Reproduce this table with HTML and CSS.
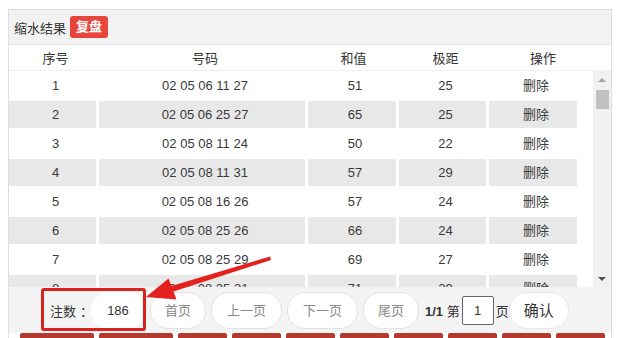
FILE: index.html
```html
<!DOCTYPE html>
<html lang="zh-CN">
<head>
<meta charset="utf-8">
<title>缩水结果</title>
<link rel="stylesheet" href="styles.css">
</head>
<body>
<div class="panel">
  <div class="panel-head"><span class="title">缩水结果</span><span class="badge">复盘</span></div>
  <div class="thead">
    <div class="th">序号</div><div class="th">号码</div><div class="th">和值</div><div class="th">极距</div><div class="th">操作</div>
  </div>
  <div class="tbody-wrap">
    <div class="tbody">
      <div class="row"><div class="td">1</div><div class="td">02 05 06 11 27</div><div class="td">51</div><div class="td">25</div><div class="td">删除</div></div>
      <div class="row alt"><div class="td">2</div><div class="td">02 05 06 25 27</div><div class="td">65</div><div class="td">25</div><div class="td">删除</div></div>
      <div class="row"><div class="td">3</div><div class="td">02 05 08 11 24</div><div class="td">50</div><div class="td">22</div><div class="td">删除</div></div>
      <div class="row alt"><div class="td">4</div><div class="td">02 05 08 11 31</div><div class="td">57</div><div class="td">29</div><div class="td">删除</div></div>
      <div class="row"><div class="td">5</div><div class="td">02 05 08 16 26</div><div class="td">57</div><div class="td">24</div><div class="td">删除</div></div>
      <div class="row alt"><div class="td">6</div><div class="td">02 05 08 25 26</div><div class="td">66</div><div class="td">24</div><div class="td">删除</div></div>
      <div class="row"><div class="td">7</div><div class="td">02 05 08 25 29</div><div class="td">69</div><div class="td">27</div><div class="td">删除</div></div>
      <div class="row alt"><div class="td">8</div><div class="td">02 05 08 25 31</div><div class="td">71</div><div class="td">29</div><div class="td">删除</div></div>
    </div>
    <div class="scrollbar">
      <div class="sb-btn"><span class="tri-up"></span></div>
      <div class="sb-thumb"></div>
      <div class="sb-fill"></div>
      <div class="sb-btn"><span class="tri-down"></span></div>
    </div>
  </div>
  <div class="footer">
    <span class="count-label">注数<span class="colon">：</span></span>
    <span class="count-val">186</span>
    <span class="pbtn w56">首页</span>
    <span class="pbtn w71">上一页</span>
    <span class="pbtn w71">下一页</span>
    <span class="pbtn w56">尾页</span>
    <span class="pages"><b>1/1</b> 第</span>
    <span class="page-input">1</span>
    <span class="page-unit">页</span>
    <span class="pbtn confirm">确认</span>
  </div>
  <div class="redrow">
    <span class="rb wide"></span><span class="rb wide"></span><span class="rb"></span><span class="rb"></span><span class="rb"></span><span class="rb"></span><span class="rb"></span><span class="rb"></span><span class="rb"></span><span class="rb"></span>
  </div>
</div>
<div class="callout-box"></div>
<svg class="arrow" width="640" height="338" viewBox="0 0 640 338">
  <polygon points="146,297 168.5,278.5 171.5,286 270,256.5 271,260 173.5,291.5 176.5,299.5" fill="#e3211d"/>
</svg>
</body>
</html>
```

FILE: styles.css
```css
html, body {
  margin: 0;
  padding: 0;
  background: #fff;
  height: 338px;
  overflow: hidden;
}
body {
  font-family: "Liberation Sans", "Noto Sans CJK SC", sans-serif;
  font-size: 13px;
  color: #333;
  position: relative;
}
.panel {
  margin: 9px 0 0 8px;
  width: 604px;
  box-sizing: border-box;
  border: 1px solid #dedede;
  border-bottom: none;
  background: #fff;
}
.panel-head {
  height: 34px;
  border-bottom: 1px solid #e6e6e6;
  background: #f2f2f2;
  display: flex;
  align-items: center;
  padding-left: 5px;
}
.title {
  color: #333;
}
.badge {
  margin-left: 4px;
  height: 22px;
  line-height: 22px;
  padding: 0 6px;
  background: #e8463d;
  color: #fff;
  font-weight: bold;
  border-radius: 3px;
}
.thead {
  height: 26px;
  display: grid;
  grid-template-columns: 87px 206px 85px 93px 96px;
  column-gap: 3px;
  align-items: center;
  border-bottom: 1px solid #f0f0f0;
  box-sizing: border-box;
}
.th {
  text-align: center;
  padding-left: 6px;
  color: #333;
}
.tbody-wrap {
  display: flex;
  height: 216px;
  overflow: hidden;
}
.tbody {
  width: 584px;
  background: #fff;
}
.row {
  height: 29px;
  box-sizing: border-box;
  padding: 1px 0;
  display: grid;
  grid-template-columns: 87px 206px 88px 87px 88px;
  column-gap: 3px;
}
.td {
  text-align: center;
  padding-left: 6px;
  line-height: 27px;
  color: #3a3a3a;
}
.row.alt .td {
  background: #e8e8e8;
}
.scrollbar {
  width: 18px;
  background: #f1f1f1;
  display: flex;
  flex-direction: column;
}
.sb-btn {
  height: 17px;
  display: flex;
  align-items: center;
  justify-content: center;
}
.tri-up {
  width: 0;
  height: 0;
  border-left: 4px solid transparent;
  border-right: 4px solid transparent;
  border-bottom: 4px solid #a3a3a3;
}
.tri-down {
  width: 0;
  height: 0;
  border-left: 4px solid transparent;
  border-right: 4px solid transparent;
  border-top: 4px solid #505050;
}
.sb-thumb {
  margin: 2px 2px 0 3px;
  height: 19px;
  background: #c1c1c1;
}
.sb-fill {
  flex: 1;
}
.footer {
  height: 46px;
  background: #f4f4f4;
  display: flex;
  align-items: center;
}
.count-label {
  margin-left: 41px;
  width: 41px;
  color: #333;
  white-space: nowrap;
}
.colon {
  padding-left: 4px;
}
.count-val {
  width: 54px;
  height: 37px;
  line-height: 37px;
  border-radius: 18px;
  background: #fff;
  text-align: center;
  color: #333;
}
.pbtn {
  margin-left: 5px;
  height: 37px;
  line-height: 35px;
  box-sizing: border-box;
  border: 1px solid #e2e2e2;
  border-radius: 18px;
  background: #fff;
  text-align: center;
  color: #888;
}
.w56 {
  width: 56px;
}
.w71 {
  width: 71px;
}
.pages {
  margin-left: 6px;
  color: #333;
}
.pages b {
  font-weight: bold;
}
.page-input {
  margin-left: 2px;
  width: 32px;
  height: 29px;
  line-height: 27px;
  box-sizing: border-box;
  border: 1px solid #666;
  border-radius: 2px;
  background: #fff;
  text-align: center;
  color: #333;
}
.page-unit {
  margin-left: 2px;
  color: #333;
}
.pbtn.confirm {
  margin-left: 0;
  width: 60px;
  font-size: 15px;
  color: #333;
  border-color: #e8e8e8;
}
.redrow {
  display: flex;
  gap: 5px;
  padding-left: 11px;
  height: 30px;
}
.rb {
  width: 49px;
  height: 30px;
  background: #b5392f;
  border-radius: 2px;
}
.rb.wide {
  width: 74px;
}
.callout-box {
  position: absolute;
  left: 41px;
  top: 288px;
  width: 105px;
  height: 43px;
  box-sizing: border-box;
  border: 3px solid #d8241c;
  border-radius: 3px;
}
.arrow {
  position: absolute;
  left: 0;
  top: 0;
  pointer-events: none;
}
```
